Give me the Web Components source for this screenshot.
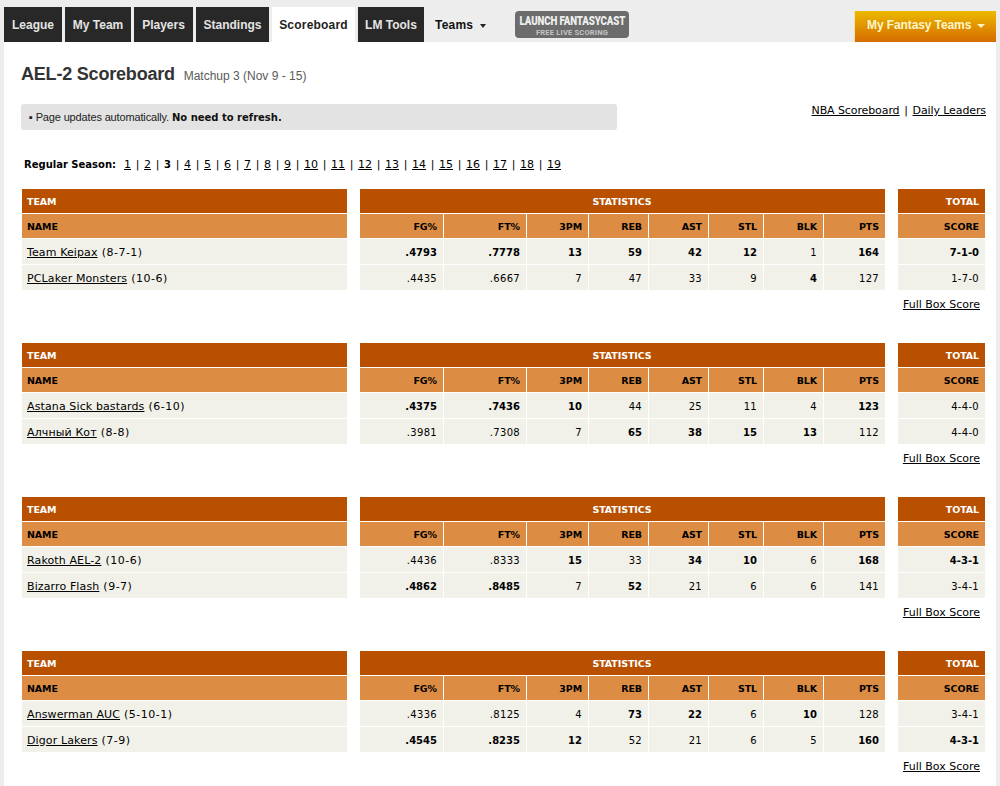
<!DOCTYPE html>
<html>
<head>
<meta charset="utf-8">
<title>AEL-2 Scoreboard</title>
<style>
    html, body { margin: 0; height: 100%; }
    body { background: #ededed; font-family: "DejaVu Sans", Verdana, sans-serif; color: #000; }
</style>
</head>
<body>
<league-page>
    <top-nav slot="nav">
        <nav-tab>League</nav-tab>
        <nav-tab>My Team</nav-tab>
        <nav-tab>Players</nav-tab>
        <nav-tab>Standings</nav-tab>
        <nav-tab active>Scoreboard</nav-tab>
        <nav-tab>LM Tools</nav-tab>
    </top-nav>
    <page-title sub="Matchup 3 (Nov 9 - 15)">AEL-2 Scoreboard</page-title>
    <notice-row></notice-row>
    <week-pager current="3" total="19"></week-pager>
    <matchup-block data-rows='[["Team Keipax","(8-7-1)","*.4793","*.7778","*13","*59","*42","*12","1","*164","*7-1-0"],["PCLaker Monsters","(10-6)",".4435",".6667","7","47","33","9","*4","127","1-7-0"]]'></matchup-block>
    <matchup-block data-rows='[["Astana Sick bastards","(6-10)","*.4375","*.7436","*10","44","25","11","4","*123","4-4-0"],["Алчный Кот","(8-8)",".3981",".7308","7","*65","*38","*15","*13","112","4-4-0"]]'></matchup-block>
    <matchup-block data-rows='[["Rakoth AEL-2","(10-6)",".4436",".8333","*15","33","*34","*10","6","*168","*4-3-1"],["Bizarro Flash","(9-7)","*.4862","*.8485","7","*52","21","6","6","141","3-4-1"]]'></matchup-block>
    <matchup-block data-rows='[["Answerman AUC","(5-10-1)",".4336",".8125","4","*73","*22","6","*10","128","3-4-1"],["Digor Lakers","(7-9)","*.4545","*.8235","*12","52","21","6","5","*160","*4-3-1"]]'></matchup-block>
</league-page>

<script>
class LeaguePage extends HTMLElement {
    constructor() {
        super();
        this.attachShadow({ mode: 'open' });
        this.shadowRoot.innerHTML = `
            <style>
                :host { display: block; min-height: 100%; }
                main {
                    background: #fff;
                    margin: 0 4px;
                    padding: 0 0 9px;
                    display: flex;
                    flex-direction: column;
                }
            </style>
            <slot name="nav"></slot>
            <main><slot></slot></main>
        `;
    }
}

class TopNav extends HTMLElement {
    constructor() {
        super();
        this.attachShadow({ mode: 'open' });
        this.shadowRoot.innerHTML = `
            <style>
                :host {
                    display: flex;
                    height: 42px;
                    padding: 0 4px;
                    box-sizing: border-box;
                    align-items: flex-end;
                    font-family: "Liberation Sans", Arial, sans-serif;
                }
                .tabs {
                    display: grid;
                    grid-template-columns: 58px 66px 59px 73px 83px 66px;
                    gap: 3px;
                }
                .teams {
                    display: flex;
                    align-items: center;
                    gap: 7px;
                    height: 35px;
                    margin-left: 11px;
                    width: 80px;
                    font-size: 12px;
                    font-weight: bold;
                    letter-spacing: .2px;
                    color: #111;
                }
                .arrow {
                    width: 0;
                    height: 0;
                    margin-top: 2px;
                    border: 3.5px solid transparent;
                    border-top: 4px solid #222;
                    border-bottom: 0;
                }
                .cast {
                    width: 114px;
                    height: 27px;
                    margin-bottom: 4px;
                    background: #6c6c6c;
                    border-radius: 4px;
                    display: flex;
                    flex-direction: column;
                    align-items: center;
                    justify-content: center;
                    color: #eee;
                    font-family: Roboto, sans-serif;
                    font-weight: 700;
                    white-space: nowrap;
                }
                .cast b {
                    font-size: 13px;
                    line-height: 15px;
                    letter-spacing: -.2px;
                    transform: scaleX(.75);
                }
                .cast span { font-size: 7.5px; line-height: 9px; letter-spacing: .2px; color: #c4c4c4; }
                .mine {
                    margin-left: auto;
                    width: 141px;
                    height: 31px;
                    box-sizing: border-box;
                    display: flex;
                    align-items: center;
                    padding: 0 0 3px 12px;
                    gap: 6px;
                    background: linear-gradient(#ecb900, #d56b00);
                    box-shadow: -1px 0 0 #f6e2b0;
                    color: #fff6c8;
                    font-size: 12px;
                    font-weight: bold;
                    letter-spacing: -.1px;
                }
                .mine i {
                    width: 0;
                    height: 0;
                    margin-top: 2px;
                    border: 4px solid transparent;
                    border-top: 4px solid #fff3c0;
                    border-bottom: 0;
                }
            </style>
            <div class="tabs"><slot></slot></div>
            <div class="teams">Teams <span class="arrow"></span></div>
            <div class="cast"><b>LAUNCH FANTASYCAST</b><span>FREE LIVE SCORING</span></div>
            <div class="mine">My Fantasy Teams <i></i></div>
        `;
    }
}

class NavTab extends HTMLElement {
    constructor() {
        super();
        this.attachShadow({ mode: 'open' });
        this.shadowRoot.innerHTML = `
            <style>
                :host {
                    display: flex;
                    align-items: center;
                    justify-content: center;
                    height: 35px;
                    background: #282828;
                    color: #e4e4e4;
                    font-size: 12px;
                    font-weight: bold;
                    cursor: pointer;
                }
                :host([active]) {
                    background: #fff;
                    color: #222;
                    letter-spacing: .2px;
                }
            </style>
            <slot></slot>
        `;
    }
}

class PageTitle extends HTMLElement {
    constructor() {
        super();
        this.attachShadow({ mode: 'open' });
        this.shadowRoot.innerHTML = `
            <style>
                :host {
                    display: block;
                    padding: 22px 0 0 17px;
                    height: 40px;
                    font-family: "Liberation Sans", Arial, sans-serif;
                    color: #333;
                }
                h1 { margin: 0; font-size: 18px; line-height: 21px; font-weight: bold; letter-spacing: -.2px; }
                small { font-size: 12px; font-weight: normal; color: #5a5a5a; letter-spacing: 0; margin-left: 4px; }
            </style>
            <h1><slot></slot> <small>${this.getAttribute('sub')}</small></h1>
        `;
    }
}

class NoticeRow extends HTMLElement {
    constructor() {
        super();
        this.attachShadow({ mode: 'open' });
        this.shadowRoot.innerHTML = `
            <style>
                :host {
                    display: flex;
                    justify-content: space-between;
                    padding: 0 10px 0 17px;
                    height: 26px;
                }
                .note {
                    width: 596px;
                    height: 26px;
                    box-sizing: border-box;
                    padding: 0 0 0 8px;
                    background: #e3e3e3;
                    border-radius: 3px;
                    display: flex;
                    align-items: center;
                    font: 11px "Liberation Sans", Arial, sans-serif;
                    letter-spacing: -.15px;
                    color: #222;
                    white-space: pre;
                }
                .note b { font: bold 10px "DejaVu Sans", Verdana, sans-serif; letter-spacing: 0; color: #111; }
                .links { display: flex; font-size: 11px; line-height: 14px; letter-spacing: -.1px; }
                .links span { width: 13px; text-align: center; }
                a { color: #000; text-decoration: underline; }
            </style>
            <div class="note">▪ Page updates automatically. <b>No need to refresh.</b></div>
            <div class="links"><a>NBA Scoreboard</a><span>|</span><a>Daily Leaders</a></div>
        `;
    }
}

class WeekPager extends HTMLElement {
    connectedCallback() {
        const current = Number(this.getAttribute('current'));
        const total = Number(this.getAttribute('total'));
        const weeks = [];
        for (let i = 1; i <= total; i++) {
            weeks.push(i === current ? `<b>${i}</b>` : `<a>${i}</a>`);
        }
        this.attachShadow({ mode: 'open' });
        this.shadowRoot.innerHTML = `
            <style>
                :host {
                    display: flex;
                    align-items: center;
                    margin-top: 28px;
                    padding-left: 20px;
                    height: 13px;
                    margin-bottom: 18px;
                    font-size: 11px;
                    line-height: 13px;
                }
                a { text-decoration: underline; color: #000; }
                b { font-size: 10px; width: 7px; text-align: center; }
                .label { font-size: 10px; font-weight: bold; width: auto; margin-right: 8px; }
                .sep { width: 13px; text-align: center; }
            </style>
            <b class="label">Regular Season:</b>
            ${weeks.join('<span class="sep">|</span>')}
        `;
    }
}

const STAT_COLS = ['FG%', 'FT%', '3PM', 'REB', 'AST', 'STL', 'BLK', 'PTS'];

function statCell(value) {
    return value.startsWith('*')
        ? `<div class="cell num"><b>${value.slice(1)}</b></div>`
        : `<div class="cell num">${value}</div>`;
}

class MatchupBlock extends HTMLElement {
    connectedCallback() {
        const rows = JSON.parse(this.dataset.rows);
        const stats = rows.map(r => r.slice(2, 10).map(statCell).join('')).join('');
        this.attachShadow({ mode: 'open' });
        this.shadowRoot.innerHTML = `
            <style>
                :host {
                    display: block;
                    height: 154px;
                    padding-left: 18px;
                    font-size: 10px;
                }
                .tables {
                    display: grid;
                    grid-template-columns: 325px 525px 87px;
                    gap: 13px;
                }
                .table {
                    display: grid;
                    grid-template-rows: 24px 24px 25px 25px;
                    gap: 1px;
                }
                .stats {
                    grid-template-columns: 83px 82px 61px 59px 59px 54px 59px 61px;
                }
                .cell {
                    display: flex;
                    align-items: center;
                    padding: 1px 6px 0 5px;
                    background: #f1f1e9;
                    white-space: pre;
                }
                .name { font-size: 11px; gap: 4px; }
                .name a { letter-spacing: .12px; }
                .name span { letter-spacing: .5px; }
                .num { justify-content: flex-end; letter-spacing: .3px; }
                .num b { letter-spacing: 0; }
                .top {
                    padding-top: 0;
                    background: #b85000;
                    color: #fff;
                    font-size: 9.5px;
                    font-weight: bold;
                    letter-spacing: -.1px;
                }
                .sub {
                    padding-top: 0;
                    background: #dd8d43;
                    font-size: 9.5px;
                    font-weight: bold;
                    letter-spacing: -.1px;
                }
                .span { grid-column: 1 / -1; justify-content: center; }
                .right { justify-content: flex-end; }
                a { color: #000; text-decoration: underline; }
                .box { text-align: right; padding: 8px 16px 0 0; font-size: 11px; line-height: 14px; }
            </style>
            <div class="tables">
                <div class="table">
                    <div class="cell top">TEAM</div>
                    <div class="cell sub">NAME</div>
                    ${rows.map(r => `<div class="cell name"><a>${r[0]}</a><span>${r[1]}</span></div>`).join('')}
                </div>
                <div class="table stats">
                    <div class="cell top span">STATISTICS</div>
                    ${STAT_COLS.map(c => `<div class="cell sub right">${c}</div>`).join('')}
                    ${stats}
                </div>
                <div class="table">
                    <div class="cell top right">TOTAL</div>
                    <div class="cell sub right">SCORE</div>
                    ${rows.map(r => statCell(r[10])).join('')}
                </div>
            </div>
            <div class="box"><a>Full Box Score</a></div>
        `;
    }
}

customElements.define('league-page', LeaguePage);
customElements.define('top-nav', TopNav);
customElements.define('nav-tab', NavTab);
customElements.define('page-title', PageTitle);
customElements.define('notice-row', NoticeRow);
customElements.define('week-pager', WeekPager);
customElements.define('matchup-block', MatchupBlock);
</script>
</body>
</html>
